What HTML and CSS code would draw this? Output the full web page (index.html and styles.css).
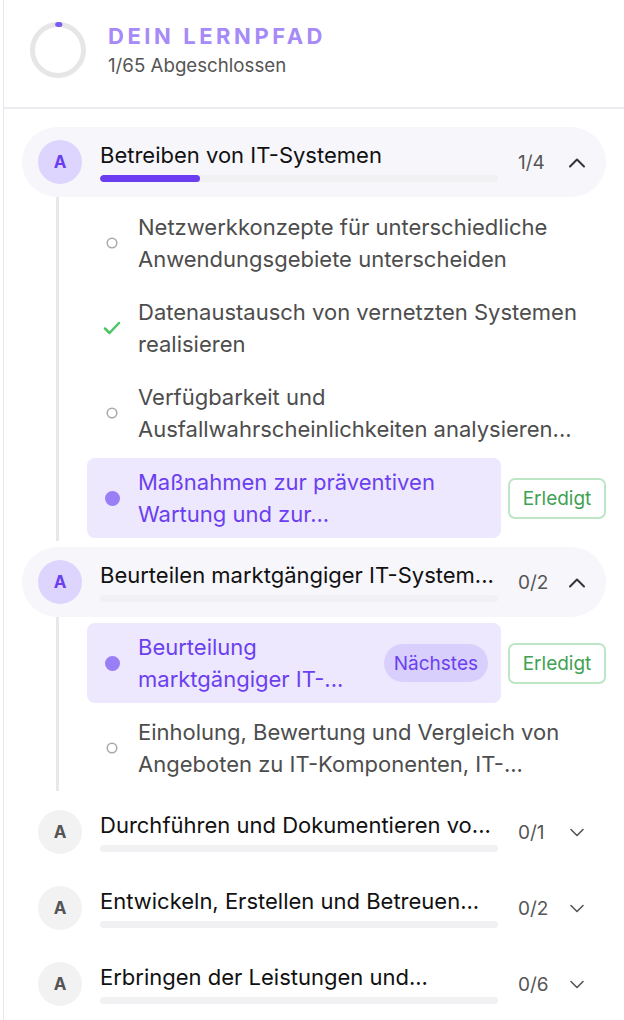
FILE: index.html
```html
<!DOCTYPE html>
<html lang="de">
<head>
<meta charset="utf-8">
<title>Dein Lernpfad</title>
<link rel="stylesheet" href="styles.css">
</head>
<body>
<div class="panel">
  <header class="path-head">
    <svg class="ring" width="56" height="56" viewBox="0 0 56 56">
      <circle cx="28" cy="28" r="25.5" fill="none" stroke="#e6e6e6" stroke-width="5"/>
      <circle cx="28" cy="28" r="25.5" fill="none" stroke="#7c5cf6" stroke-width="5" stroke-linecap="round" stroke-dasharray="2.5 170" transform="rotate(-91 28 28)"/>
    </svg>
    <div class="head-text">
      <div class="head-title">DEIN LERNPFAD</div>
      <div class="head-sub">1/65 Abgeschlossen</div>
    </div>
  </header>

  <div class="modules">
    <section class="module open">
      <div class="mod-head">
        <div class="avatar">A</div>
        <div class="mod-main">
          <div class="mod-title">Betreiben von IT-Systemen</div>
          <div class="bar"><div class="bar-fill" style="width:25%"></div></div>
        </div>
        <div class="mod-count">1/4</div>
        <svg class="chev" width="18" height="11" viewBox="0 0 18 11"><polyline points="2,9.5 9,2.5 16,9.5" fill="none" stroke="#333" stroke-width="2" stroke-linecap="round" stroke-linejoin="round"/></svg>
      </div>
      <div class="mod-children">
        <div class="row">
          <div class="item">
            <span class="ico"><svg width="12" height="12" viewBox="0 0 12 12"><circle cx="6" cy="6" r="4.8" fill="none" stroke="#a9a9a9" stroke-width="1.5"/></svg></span>
            <span class="item-text">Netzwerkkonzepte für unterschiedliche Anwendungsgebiete unterscheiden</span>
          </div>
        </div>
        <div class="row">
          <div class="item">
            <span class="ico"><svg width="18" height="14" viewBox="0 0 18 14"><polyline points="2,7.5 6.5,12 16,2" fill="none" stroke="#4cc463" stroke-width="2.5" stroke-linecap="round" stroke-linejoin="round"/></svg></span>
            <span class="item-text">Datenaustausch von vernetzten Systemen realisieren</span>
          </div>
        </div>
        <div class="row">
          <div class="item">
            <span class="ico"><svg width="12" height="12" viewBox="0 0 12 12"><circle cx="6" cy="6" r="4.8" fill="none" stroke="#a9a9a9" stroke-width="1.5"/></svg></span>
            <span class="item-text">Verfügbarkeit und Ausfallwahrscheinlichkeiten analysieren...</span>
          </div>
        </div>
        <div class="row">
          <div class="item current">
            <span class="ico"><span class="dot"></span></span>
            <span class="item-text">Maßnahmen zur präventiven Wartung und zur...</span>
          </div>
          <button class="done-btn">Erledigt</button>
        </div>
      </div>
    </section>

    <section class="module open">
      <div class="mod-head">
        <div class="avatar">A</div>
        <div class="mod-main">
          <div class="mod-title">Beurteilen marktgängiger IT-System...</div>
          <div class="bar"><div class="bar-fill" style="width:0%"></div></div>
        </div>
        <div class="mod-count">0/2</div>
        <svg class="chev" width="18" height="11" viewBox="0 0 18 11"><polyline points="2,9.5 9,2.5 16,9.5" fill="none" stroke="#333" stroke-width="2" stroke-linecap="round" stroke-linejoin="round"/></svg>
      </div>
      <div class="mod-children">
        <div class="row">
          <div class="item current">
            <span class="ico"><span class="dot"></span></span>
            <span class="item-text">Beurteilung marktgängiger IT-...</span>
            <span class="badge">Nächstes</span>
          </div>
          <button class="done-btn">Erledigt</button>
        </div>
        <div class="row">
          <div class="item">
            <span class="ico"><svg width="12" height="12" viewBox="0 0 12 12"><circle cx="6" cy="6" r="4.8" fill="none" stroke="#a9a9a9" stroke-width="1.5"/></svg></span>
            <span class="item-text">Einholung, Bewertung und Vergleich von Angeboten zu IT-Komponenten, IT-...</span>
          </div>
        </div>
      </div>
    </section>

    <section class="module">
      <div class="mod-head">
        <div class="avatar">A</div>
        <div class="mod-main">
          <div class="mod-title">Durchführen und Dokumentieren vo...</div>
          <div class="bar"><div class="bar-fill" style="width:0%"></div></div>
        </div>
        <div class="mod-count">0/1</div>
        <svg class="chev" width="18" height="11" viewBox="0 0 18 11"><polyline points="3,2.5 9,8.5 15,2.5" fill="none" stroke="#555" stroke-width="1.6" stroke-linecap="round" stroke-linejoin="round"/></svg>
      </div>
    </section>

    <section class="module">
      <div class="mod-head">
        <div class="avatar">A</div>
        <div class="mod-main">
          <div class="mod-title">Entwickeln, Erstellen und Betreuen...</div>
          <div class="bar"><div class="bar-fill" style="width:0%"></div></div>
        </div>
        <div class="mod-count">0/2</div>
        <svg class="chev" width="18" height="11" viewBox="0 0 18 11"><polyline points="3,2.5 9,8.5 15,2.5" fill="none" stroke="#555" stroke-width="1.6" stroke-linecap="round" stroke-linejoin="round"/></svg>
      </div>
    </section>

    <section class="module">
      <div class="mod-head">
        <div class="avatar">A</div>
        <div class="mod-main">
          <div class="mod-title">Erbringen der Leistungen und...</div>
          <div class="bar"><div class="bar-fill" style="width:0%"></div></div>
        </div>
        <div class="mod-count">0/6</div>
        <svg class="chev" width="18" height="11" viewBox="0 0 18 11"><polyline points="3,2.5 9,8.5 15,2.5" fill="none" stroke="#555" stroke-width="1.6" stroke-linecap="round" stroke-linejoin="round"/></svg>
      </div>
    </section>
  </div>
</div>
</body>
</html>
```

FILE: styles.css
```css
html, body {
  margin: 0;
  padding: 0;
  background: #ffffff;
}

body {
  font-family: Inter, "Noto Sans", "Liberation Sans", sans-serif;
  color: #333;
  overflow: hidden;
}

.panel {
  margin-left: 3px;
  border-left: 1px solid #e7e7ec;
  min-height: 1020px;
}

/* ---------- header ---------- */
.path-head {
  display: flex;
  align-items: center;
  gap: 22px;
  padding: 22px 20px 29px 26px;
  border-bottom: 2px solid #ececf1;
}

.ring {
  flex: none;
  display: block;
}

.head-title {
  font-size: 22px;
  line-height: 26px;
  font-weight: 700;
  letter-spacing: 3.55px;
  color: #a68af8;
}

.head-sub {
  margin-top: 5px;
  font-size: 18.7px;
  line-height: 24px;
  color: #555;
}

/* ---------- modules ---------- */
.modules {
  display: flex;
  flex-direction: column;
  gap: 6px;
  padding: 18px 18px 0 18px;
}

.mod-head {
  display: flex;
  align-items: center;
  height: 70px;
  padding: 0 20px 0 16px;
  border-radius: 35px;
}

.open .mod-head {
  background: #f6f6fb;
}

.avatar {
  flex: none;
  width: 44px;
  height: 44px;
  margin-right: 18px;
  border-radius: 50%;
  display: flex;
  align-items: center;
  justify-content: center;
  font-size: 17px;
  font-weight: 700;
  background: #f2f2f3;
  color: #555;
}

.open .avatar {
  background: #ddd5fd;
  color: #6b3ff0;
}

.mod-main {
  flex: 1;
  min-width: 0;
}

.mod-title {
  font-size: 22px;
  line-height: 26px;
  color: #111;
  white-space: nowrap;
  overflow: hidden;
  text-overflow: ellipsis;
}

.bar {
  margin-top: 7px;
  height: 7px;
  border-radius: 4px;
  background: #f1f1f3;
  overflow: hidden;
}

.bar-fill {
  height: 100%;
  border-radius: 4px;
  background: #6a3df0;
}

.mod-count {
  flex: none;
  width: 30px;
  margin-left: 20px;
  font-size: 19px;
  color: #555;
}

.chev {
  flex: none;
  margin-left: 20px;
  display: block;
}

/* ---------- children ---------- */
.mod-children {
  margin-left: 34px;
  border-left: 3px solid #e8e8ec;
  padding: 6px 0 3px 28px;
  display: flex;
  flex-direction: column;
  gap: 5px;
}

.row {
  display: flex;
  align-items: center;
  gap: 7px;
}

.item {
  flex: 1;
  min-width: 0;
  display: flex;
  align-items: center;
  box-sizing: border-box;
  min-height: 80px;
  padding: 8px 8px 8px 18px;
  border-radius: 8px;
}

.item.current {
  background: #ede8fd;
  padding-right: 13px;
}

.ico {
  flex: none;
  width: 14px;
  margin-right: 19px;
  display: flex;
  justify-content: center;
  align-items: center;
}

.ico svg {
  display: block;
  flex: none;
}

.dot {
  display: block;
  width: 15px;
  height: 15px;
  border-radius: 50%;
  background: #9a7ef6;
  flex: none;
}

.item-text {
  flex: 1;
  min-width: 0;
  font-size: 22px;
  line-height: 32px;
  color: #4d4d4d;
}

.current .item-text {
  color: #6b3ff0;
}

.badge {
  flex: none;
  margin-left: 10px;
  height: 38px;
  padding: 0 10px;
  border-radius: 19px;
  background: #d9cffd;
  color: #6b3ff0;
  font-size: 19px;
  display: flex;
  align-items: center;
}

.done-btn {
  flex: none;
  width: 98px;
  height: 41px;
  box-sizing: border-box;
  border: 2px solid #bde6c5;
  border-radius: 7px;
  background: #fff;
  color: #3fa152;
  font-family: inherit;
  font-size: 19px;
  padding: 0;
  display: flex;
  align-items: center;
  justify-content: center;
}
```
